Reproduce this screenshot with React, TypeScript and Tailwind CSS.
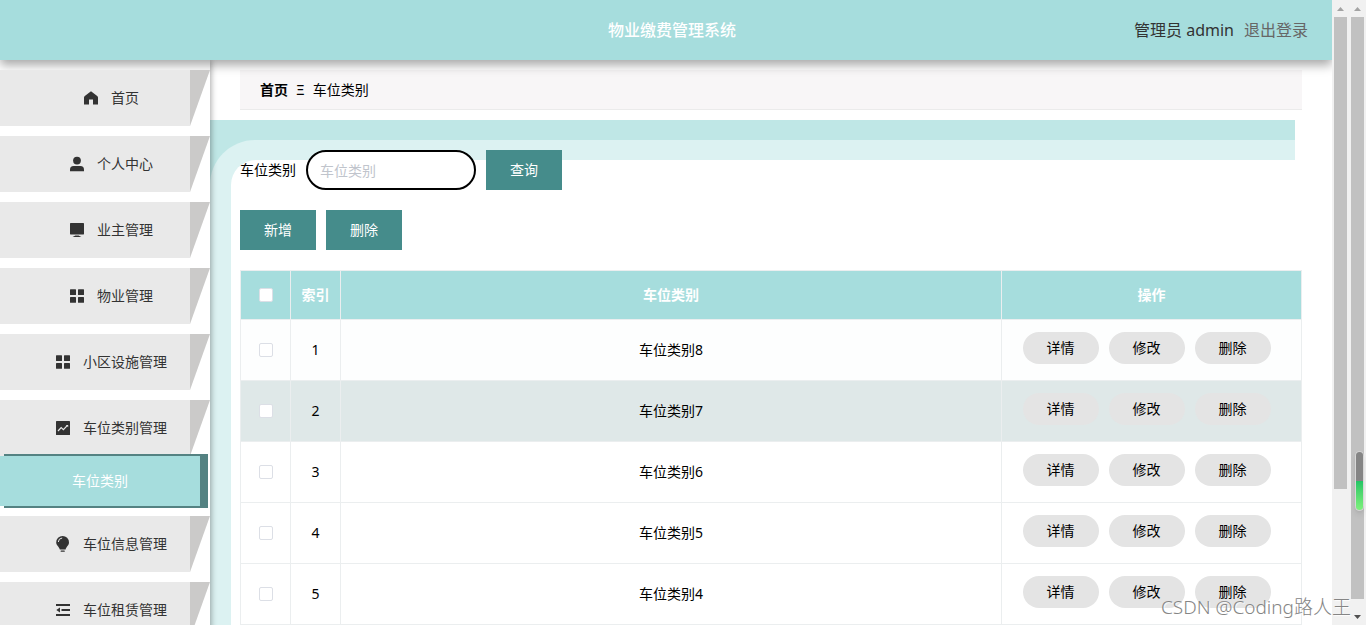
import { useState } from "react";
import type { ReactNode } from "react";

type MenuItem = {
  label: string;
  icon: ReactNode;
  children?: string[];
};

const gridIcon = (
  <>
    <rect x="0" y="0.2" width="6" height="5.8" rx="0.5" />
    <rect x="8" y="0.2" width="6" height="5.8" rx="0.5" />
    <rect x="0" y="8" width="6" height="5.8" rx="0.5" />
    <rect x="8" y="8" width="6" height="5.8" rx="0.5" />
  </>
);

const menu: MenuItem[] = [
  {
    label: "首页",
    icon: <path d="M7 0.2 L13.2 5 Q14 5.7 14 6.6 V13.4 H9 V8.6 H5 V13.4 H0 V6.6 Q0 5.7 0.8 5 Z" />,
  },
  {
    label: "个人中心",
    icon: (
      <>
        <circle cx="7" cy="3.6" r="3.9" />
        <path d="M0 14.2 V12.7 Q0 9 3.6 9 H10.4 Q14 9 14 12.7 V14.2 Z" />
      </>
    ),
  },
  {
    label: "业主管理",
    icon: (
      <>
        <rect x="0" y="0" width="14" height="11.4" rx="0.6" />
        <path d="M2.6 14 L5.4 12.4 H8.6 L11.4 14 Z" />
      </>
    ),
  },
  { label: "物业管理", icon: gridIcon },
  { label: "小区设施管理", icon: gridIcon },
  {
    label: "车位类别管理",
    icon: (
      <>
        <rect x="0" y="0" width="14" height="14" rx="0.6" />
        <path d="M2 10 L5.2 6.6 L7.4 8.6 L11.4 4.4" fill="none" stroke="#e9e9e9" strokeWidth="1.2" />
        <path d="M9.8 4 H12.2 V6.3 Z" fill="#e9e9e9" />
      </>
    ),
    children: ["车位类别"],
  },
  {
    label: "车位信息管理",
    icon: (
      <>
        <path d="M6.6 -1 A6.4 6.4 0 0 1 13 5.4 C13 8.4 10.2 9.6 9.6 12.4 H3.8 C3.2 9.6 0.2 8.4 0.2 5.4 A6.4 6.4 0 0 1 6.6 -1 Z" />
        <path d="M2.3 5 A4.3 4.3 0 0 1 6.2 1" fill="none" stroke="#e9e9e9" strokeWidth="1" />
        <rect x="4.6" y="13.4" width="4.2" height="1.4" rx="0.6" />
      </>
    ),
  },
  {
    label: "车位租赁管理",
    icon: (
      <>
        <rect x="0" y="1" width="14" height="2" />
        <rect x="5.5" y="6" width="8.5" height="2" />
        <rect x="0" y="11" width="14" height="2" />
        <path d="M0.3 7 L4 4.4 V9.6 Z" />
      </>
    ),
  },
];

const rows = ["车位类别8", "车位类别7", "车位类别6", "车位类别5", "车位类别4"];

function rowColor(index: number) {
  if (index === 0) return "bg-[#fdfefe]";
  if (index === 1) return "bg-[#dfe8e8]";
  return "bg-white";
}

function Sidebar() {
  return (
    <aside className="relative w-[210px] shrink-0 bg-white pt-2.5 shadow-[1px_0_6px_rgba(0,0,0,0.35)]">
      <nav className="relative z-20">
        <ul className="flex flex-col gap-2.5">
          {menu.map((item) => (
            <li key={item.label}>
              <a href="#" className="relative flex h-14 items-center justify-center gap-[13px] pl-[13px] text-[#333]">
                <span className="absolute inset-0 -z-10 flex">
                  <span className="flex-1 bg-[#e9e9e9]" />
                  <span className="w-5 bg-[#cbcac9] [clip-path:polygon(0_0,100%_0,0_100%)]" />
                </span>
                <svg viewBox="0 0 14 14" className="size-3.5 overflow-visible fill-[#333]">
                  {item.icon}
                </svg>
                <span>{item.label}</span>
              </a>
              {item.children?.map((child) => (
                <a
                  key={child}
                  href="#"
                  className="mr-2.5 flex h-[50px] items-center justify-center bg-[#a6dddd] text-white shadow-[6px_0_0_2px_#548282]"
                >
                  {child}
                </a>
              ))}
            </li>
          ))}
        </ul>
      </nav>
    </aside>
  );
}

function ActionButton({ children }: { children: ReactNode }) {
  return (
    <button type="button" className="h-10 w-[76px] bg-[#458c8b] text-white">
      {children}
    </button>
  );
}

function CheckBox({ label }: { label: string }) {
  return (
    <input
      type="checkbox"
      aria-label={label}
      className="block mx-auto size-3.5 appearance-none rounded-xs border border-[#dcdfe6] bg-white checked:bg-[#458c8b]"
    />
  );
}

function CategoryTable() {
  return (
    <table className="mt-5 w-full table-fixed border-collapse text-center [&_td]:border [&_td]:border-[#ebeeef] [&_th]:border [&_th]:border-[#ebeeef]">
      <colgroup>
        <col className="w-[50px]" />
        <col className="w-[50px]" />
        <col />
        <col className="w-[300px]" />
      </colgroup>
      <thead className="bg-[#a6dddd] text-white">
        <tr className="h-[49px]">
          <th><CheckBox label="全选" /></th>
          <th>索引</th>
          <th>车位类别</th>
          <th>操作</th>
        </tr>
      </thead>
      <tbody className="text-black">
        {rows.map((name, i) => (
          <tr key={name} className={`h-[61px] ${rowColor(i)}`}>
            <td><CheckBox label={name} /></td>
            <td>{i + 1}</td>
            <td>{name}</td>
            <td className="pb-1">
              <div className="flex justify-center gap-2.5 pr-2.5">
                {["详情", "修改", "删除"].map((action) => (
                  <button key={action} type="button" className="h-8 w-[76px] rounded-full bg-[#e4e4e4]">
                    {action}
                  </button>
                ))}
              </div>
            </td>
          </tr>
        ))}
      </tbody>
    </table>
  );
}

function ScrollTrack({ thumb }: { thumb: string }) {
  return (
    <div className="flex w-[17px] shrink-0 flex-col items-center bg-[#f1f1f1]">
      <svg viewBox="0 0 17 17" className="size-[17px] shrink-0 fill-[#a3a3a3]">
        <path d="M8.5 7 L12 11 H5 Z" />
      </svg>
      <div className={`w-[13px] bg-[#c1c1c1] ${thumb}`} />
      <svg viewBox="0 0 17 17" className="mt-auto size-[17px] shrink-0 fill-[#505050]">
        <path d="M8.5 11 L12 7 H5 Z" />
      </svg>
    </div>
  );
}

export default function App() {
  const [keyword, setKeyword] = useState("");

  return (
    <div className="relative flex h-screen overflow-hidden bg-white font-['Noto_Sans','Noto_Sans_CJK_SC',sans-serif] text-sm leading-5">
      <div className="flex min-w-0 flex-1 flex-col overflow-hidden">
        <header className="relative z-10 grid h-[60px] shrink-0 grid-cols-[1fr_auto_1fr] items-center bg-[#a6dddd] pr-6 pl-9 text-base shadow-[0_5px_10px_rgba(0,0,0,0.35)]">
          <h1 className="col-start-2 font-medium text-white">物业缴费管理系统</h1>
          <div className="flex justify-end gap-2.5 text-[#333]">
            <span>管理员 admin</span>
            <a href="#" className="text-[#666]">退出登录</a>
          </div>
        </header>

        <div className="flex flex-1">
          <Sidebar />
          <main className="min-w-0 flex-1 pt-2.5">
            <nav className="mx-[30px] flex h-10 items-center gap-2 border-b border-[#ebebeb] bg-[#f8f6f7] px-5 text-black">
              <a href="#" className="font-bold">首页</a>
              <span>Ξ</span>
              <span>车位类别</span>
            </nav>

            <section className="mt-2.5 grid">
              {/* stepped teal frame behind the content */}
              <div className="col-start-1 row-start-1 mr-[37px] bg-[#bfe7e6] pt-5">
                <div className="h-full rounded-tl-[45px] bg-[#dcf2f2] pt-5 pl-[21px]">
                  <div className="h-full rounded-tl-[25px] bg-white" />
                </div>
              </div>

              <div className="z-[1] col-start-1 row-start-1 min-w-0 px-[30px] pt-[30px]">
                <form className="flex items-center gap-2.5" onSubmit={(e) => e.preventDefault()}>
                  <label htmlFor="keyword" className="text-black">车位类别</label>
                  <input
                    id="keyword"
                    type="text"
                    value={keyword}
                    onChange={(e) => setKeyword(e.target.value)}
                    placeholder="车位类别"
                    className="h-10 w-[170px] rounded-full border-2 border-black bg-white px-3 outline-none placeholder:text-[#c0c4cc]"
                  />
                  <button type="submit" className="h-10 w-[76px] bg-[#458c8b] text-white">查询</button>
                </form>
                <div className="mt-5 flex gap-2.5">
                  <ActionButton>新增</ActionButton>
                  <ActionButton>删除</ActionButton>
                </div>
                <CategoryTable />
              </div>
            </section>
          </main>
        </div>
      </div>

      <div className="-mb-3 flex"><ScrollTrack thumb="h-[472px]" /></div>
      <ScrollTrack thumb="h-[582px]" />

      <div className="absolute top-[451px] right-0.5 z-30 flex h-[60px] w-[9px] flex-col overflow-hidden rounded-full border border-[#d8d8d8] shadow-md">
        <span className="flex-1 bg-[#858585]" />
        <span className="flex-1 bg-linear-to-b from-[#1fc565] to-[#7df27d]" />
      </div>
      <div className="absolute right-[15px] bottom-2 z-30 text-[19px] font-light text-[#858585] [text-shadow:1px_1px_1px_#fff]">
        CSDN @Coding路人王
      </div>
    </div>
  );
}
